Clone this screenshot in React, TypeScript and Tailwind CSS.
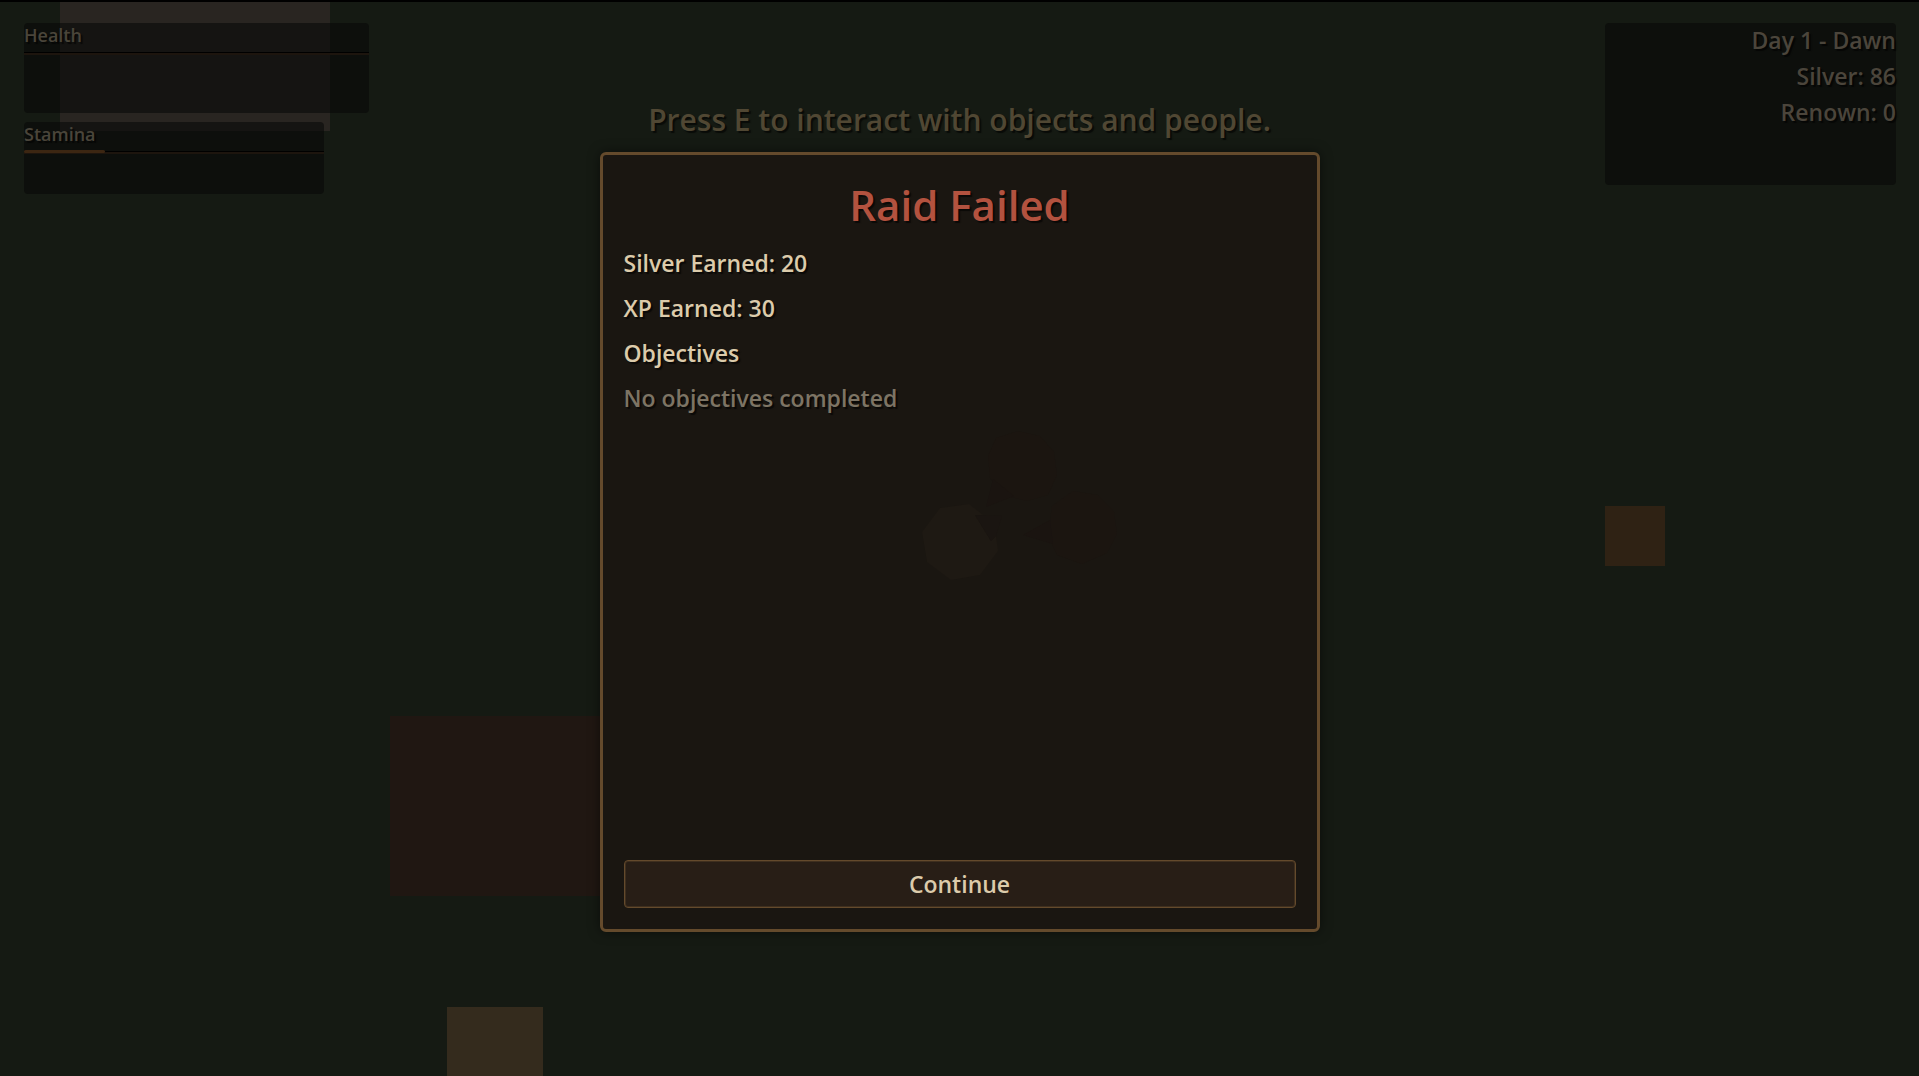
import React from "react";

const font = "font-['Open_Sans','Noto_Sans',sans-serif] font-semibold";

function Scene() {
  return (
    <div aria-hidden="true" className="absolute inset-0 overflow-hidden">
      <div className="absolute left-[60px] top-0 h-[131px] w-[270px] bg-[#292521]" />
      <div className="absolute left-[390px] top-[716px] h-[180px] w-[240px] bg-[#201712]" />
      <div className="absolute left-[447px] top-[1007px] h-[96px] w-[96px] bg-[#342b1d]" />
      <div className="absolute left-[1605px] top-[506px] size-[60px] bg-[#2f2214]" />
      <div className="absolute inset-x-0 top-0 h-0.5 bg-black" />
    </div>
  );
}

type StatProps = { label: string; value: number; panel: string };

function Stat({ label, value, panel }: StatProps) {
  return (
    <div className={`flex flex-col gap-1 rounded bg-[#070707]/57 ${panel}`}>
      <span className="text-[18px] leading-[25px] text-[#4a453a]">{label}</span>
      <div
        role="progressbar"
        aria-label={label}
        aria-valuenow={value}
        aria-valuemin={0}
        aria-valuemax={100}
        className="relative h-[3px] border-b-2 border-[#1d150e] bg-black"
      >
        <div
          className="absolute -bottom-px -top-px left-0 rounded-sm bg-[#3c2612]"
          style={{ width: `${value}%` }}
        />
      </div>
    </div>
  );
}

function Embers() {
  return (
    <svg
      aria-hidden="true"
      viewBox="0 0 340 220"
      className="absolute left-[257px] top-[245px] h-[220px] w-[340px]"
    >
      <polygon points="136,38 158,31 180,36 194,52 197,75 188,95 167,101 143,95 130,78 128,56" fill="#1b1510" />
      <polygon points="192,106 213,91 238,95 254,112 257,134 247,153 222,164 197,155 188,135" fill="#1b1510" />
      <polygon points="80,108 109,104 123,115 115,115 131,141 136,136 138,151 120,175 91,180 67,162 62,132" fill="#1e1913" />
      <polygon points="115,115 142,116 136,136 131,141" fill="#1a1511" />
      <polygon points="133,79 154,96 126,107" fill="#1a1410" />
      <polygon points="163,135 190,120 193,144" fill="#1a1410" />
    </svg>
  );
}

export default function App() {
  return (
    <main
      className={`relative min-h-screen overflow-hidden bg-[#151a13] [text-shadow:2px_2px_1px_rgba(0,0,0,0.6)] ${font}`}
    >
      <Scene />

      <header className="absolute inset-x-0 top-0 flex justify-between pl-6 pr-[23px] pt-[23px]">
        <section aria-label="Vitals" className="flex flex-col items-start gap-[9px]">
          <Stat label="Health" value={0} panel="h-[90px] w-[345px]" />
          <Stat label="Stamina" value={27} panel="h-[72px] w-[300px]" />
        </section>
        <section
          aria-label="Status"
          className="flex h-[162px] w-[291px] flex-col gap-px rounded bg-[#070707]/57 text-right text-[23px] leading-[35px] text-[#4b453b]"
        >
          <p>Day 1 - Dawn</p>
          <p>Silver: 86</p>
          <p>Renown: 0</p>
        </section>
      </header>

      <p className="absolute inset-x-0 top-[99px] text-center text-[30px] leading-[41px] text-[#504733]">
        Press E to interact with objects and people.
      </p>

      <div className="relative flex min-h-screen items-center justify-center pt-2">
        <section
          role="dialog"
          aria-labelledby="raid-title"
          className="relative flex h-[780px] w-[720px] flex-col gap-3 rounded-md border-3 border-[#644a2c] bg-[#1a1611] p-[21px] text-[23px] leading-[33px] text-[#dccbab] shadow-[0_0_12px_rgba(0,0,0,0.5)]"
        >
          <Embers />
          <h1 id="raid-title" className="pb-px text-center text-[42px] leading-[58px] text-[#b3523f]">
            Raid Failed
          </h1>
          <p>Silver Earned: 20</p>
          <p>XP Earned: 30</p>
          <h2>Objectives</h2>
          <p className="text-[#7d7464]">No objectives completed</p>
          <button
            type="button"
            className="mt-auto h-12 rounded border border-[#644a2c] bg-[#281e16] [text-shadow:none] inset-ring inset-ring-[#3f2f1e]"
          >
            Continue
          </button>
        </section>
      </div>
    </main>
  );
}
